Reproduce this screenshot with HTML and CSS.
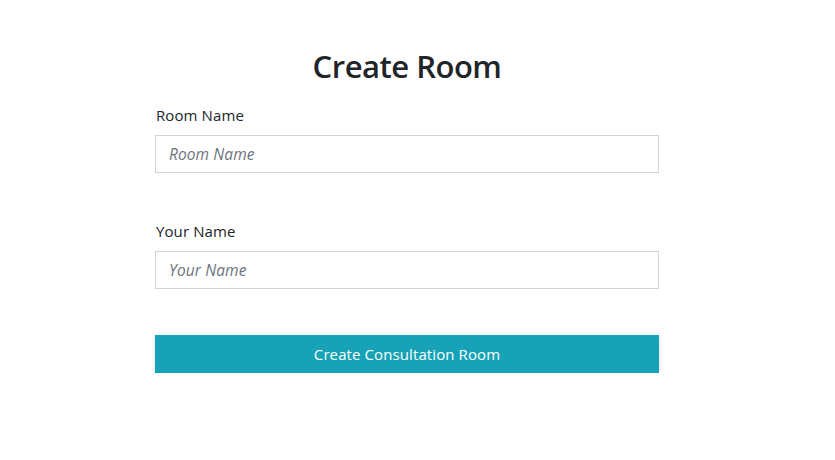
FILE: index.html
```html
<!DOCTYPE html>
<html lang="en">
<head>
<meta charset="utf-8">
<title>Create Room</title>
<link rel="stylesheet" href="styles.css">
</head>
<body>
<main class="page">
  <form class="card">
    <h1 class="title">Create Room</h1>
    <div class="group">
      <label class="label" for="room">Room Name</label>
      <input class="input" id="room" type="text" placeholder="Room Name">
    </div>
    <div class="group">
      <label class="label" for="name">Your Name</label>
      <input class="input" id="name" type="text" placeholder="Your Name">
    </div>
    <button class="btn" type="button">Create Consultation Room</button>
  </form>
</main>
</body>
</html>
```
FILE: styles.css
```css
* { box-sizing: border-box; }
html, body { margin: 0; background: #fff; }
body {
  font-family: "Open Sans", "Noto Sans", sans-serif;
  color: #212529;
}
.page {
  display: flex;
  justify-content: center;
  padding: 47px 21px 0 0;
}
.card {
  width: 504px;
  display: flex;
  flex-direction: column;
}
.title {
  margin: 0 0 18px;
  font-size: 31px;
  font-weight: 600;
  line-height: 38px;
  text-align: center;
  letter-spacing: -0.5px;
}
.group {
  display: flex;
  flex-direction: column;
  margin-bottom: 46px;
}
.label {
  font-size: 15px;
  line-height: 24px;
  margin-bottom: 8px;
  padding-left: 1px;
  letter-spacing: 0.1px;
}
.input {
  height: 38px;
  border: 1px solid #ced4da;
  border-radius: 0;
  padding: 0 13px;
  font-family: inherit;
  font-size: 15.5px;
  color: #495057;
  background: #fff;
  outline: none;
}
.input::placeholder {
  color: #6c757d;
  font-style: italic;
  letter-spacing: 0.1px;
}
.btn {
  height: 38px;
  border: none;
  border-radius: 0;
  background: #17a2b8;
  color: #fff;
  font-family: inherit;
  font-size: 15px;
  letter-spacing: 0.1px;
  box-shadow: 0 1px 4px rgba(0,0,0,0.15);
  cursor: pointer;
}
```
